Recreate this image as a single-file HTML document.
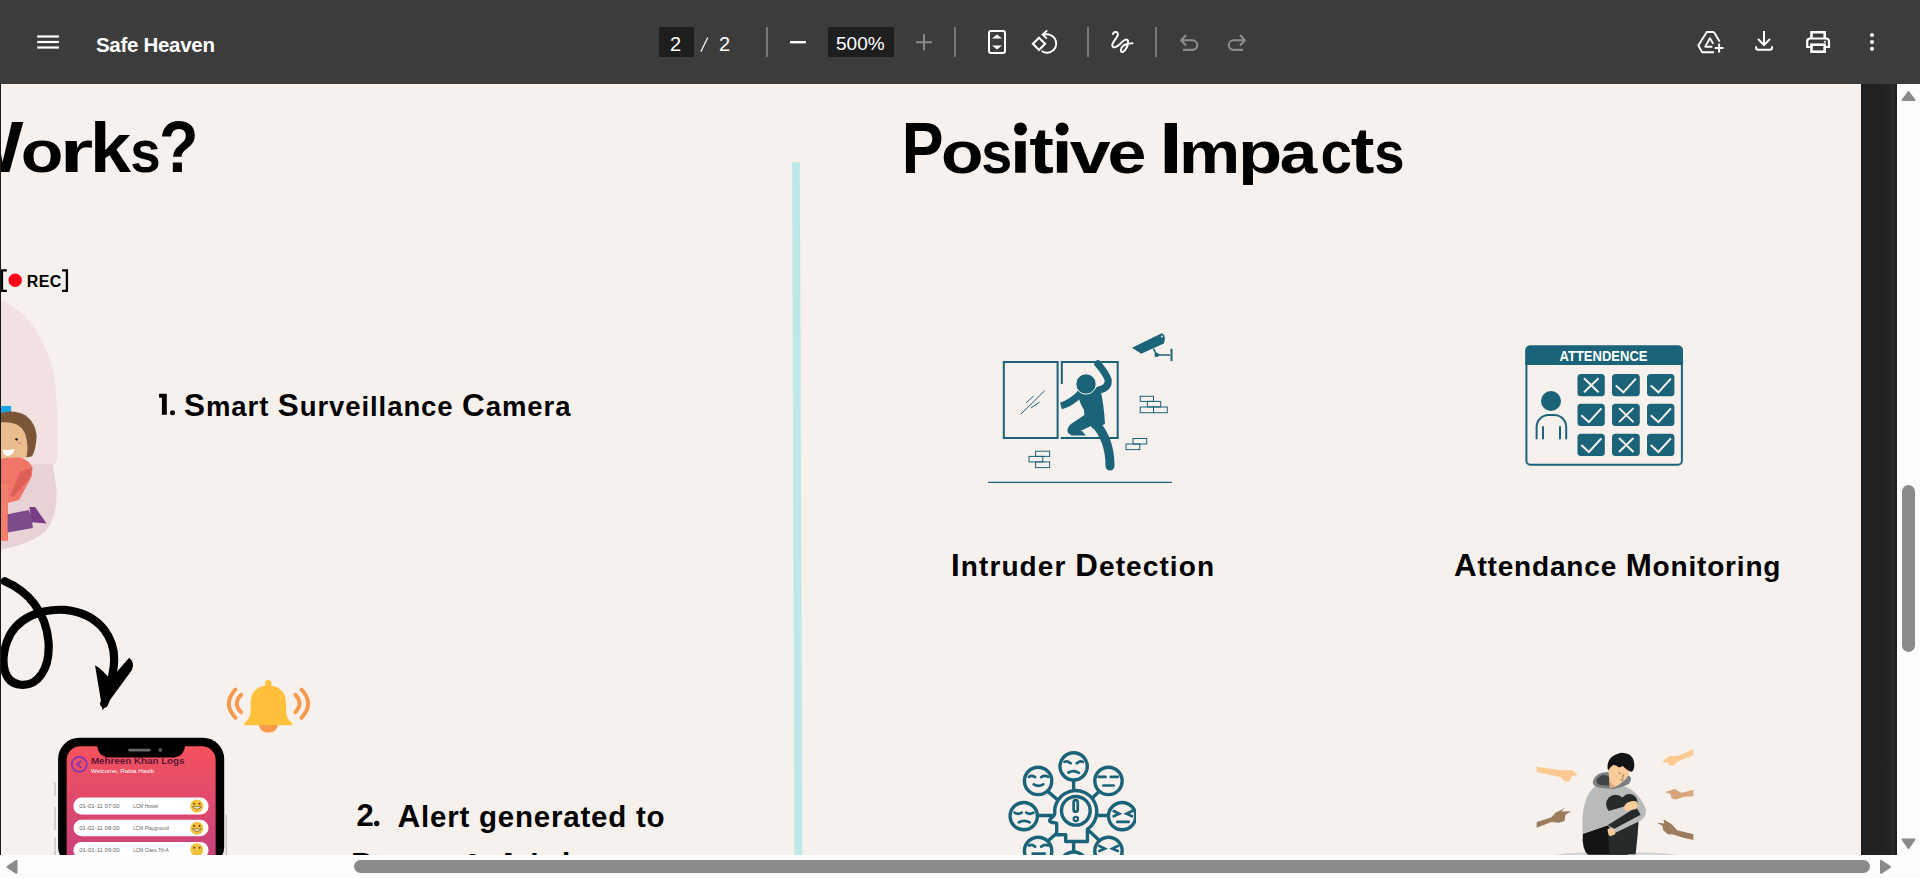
<!DOCTYPE html>
<html><head><meta charset="utf-8">
<style>
*{margin:0;padding:0;box-sizing:border-box}
html,body{width:1920px;height:878px;overflow:hidden;background:#282828;font-family:"Liberation Sans",sans-serif}
.a{position:absolute}
#tb{position:absolute;left:0;top:0;width:1920px;height:84px;background:#3c3c3c;color:#fff}
#view{position:absolute;left:0;top:84px;width:1897px;height:771px;background:linear-gradient(90deg,#1a1a1a 0,#1a1a1a 1861px,#212121 1863px,#222 1885px,#2a2a2a 1894px,#1c1c1c 1896px);overflow:hidden}
#page{position:absolute;left:1px;top:0;width:1860px;height:771px;background:#f6f1ed;overflow:hidden}
#vs{position:absolute;left:1897px;top:84px;width:23px;height:794px;background:#fcfcfc}
#hs{position:absolute;left:0;top:855px;width:1897px;height:23px;background:#fcfcfc}
.t{position:absolute;white-space:pre;color:#000;font-weight:700;line-height:1}
.tw{position:absolute;white-space:pre;color:#fff;line-height:1}
</style></head><body>
<div id="tb">
  <div class="tw" style="left:96px;top:35px;font-size:20.5px;font-weight:700;letter-spacing:-0.3px">Safe Heaven</div>
  <div class="a" style="left:659px;top:27px;width:35px;height:30px;background:#1e1e1e"></div>
  <div class="a" style="left:828px;top:27px;width:66px;height:30px;background:#1e1e1e"></div>
  <div class="tw" style="left:670px;top:34px;font-size:20px">2</div>
  
  <div class="tw" style="left:719px;top:34px;font-size:20px">2</div>
  <div class="tw" style="left:836px;top:34px;font-size:19px">500%</div>
  <svg class="a" style="left:0;top:0" width="1920" height="84" viewBox="0 0 1920 84">
    <g fill="#fff">
      <rect x="37.2" y="35.4" width="21.7" height="2.2"/>
      <rect x="37.2" y="40.9" width="21.7" height="2.2"/>
      <rect x="37.2" y="46.4" width="21.7" height="2.2"/>
      <rect x="790" y="41" width="16" height="2.4"/>
      <path d="M700.3 51.5 L707.2 37.2 L708.3 37.7 L701.4 52Z"/>
    </g>
    <g fill="#787878">
      <rect x="766" y="27" width="2" height="30"/>
      <rect x="954" y="27" width="2" height="30"/>
      <rect x="1087" y="27" width="2" height="30"/>
      <rect x="1155" y="27" width="2" height="30"/>
    </g>
    <g fill="#8a8a8a"><rect x="916" y="41.2" width="16" height="2"/><rect x="923" y="34.2" width="2" height="16"/></g>
    <!-- fit page -->
    <rect x="989" y="31" width="16" height="22" rx="2" fill="none" stroke="#fff" stroke-width="2"/>
    <path d="M992 38.5 L997 34.5 L1002 38.5Z M992 45.5 L997 49.5 L1002 45.5Z" fill="#fff"/>
    <!-- rotate -->
    <path d="M1039 37.7 L1045.1 43.85 L1039 50 L1032.9 43.85Z" fill="none" stroke="#fff" stroke-width="2.1"/>
    <path d="M1043.1 35.2 A9.2 9.2 0 1 1 1041.7 51" fill="none" stroke="#fff" stroke-width="1.9"/>
    <path d="M1047.2 30.4 L1042.6 34.6 L1046.9 38.6" fill="none" stroke="#fff" stroke-width="1.9"/>
    <!-- draw -->
    <path d="M1112.8 34 C1114.5 31 1118.5 31.5 1117.8 35 C1117 38.5 1112 42 1112.3 45.5 C1112.6 48.5 1116.5 47.5 1119.5 44.5 C1122.5 41.5 1126.5 37.5 1127.8 40.5 C1129 43.5 1126 50.5 1123 51.8 C1120.5 52.8 1120 49.5 1122.5 46.5 C1124.5 44.5 1129 43.5 1132.5 43.3" fill="none" stroke="#fff" stroke-width="2" stroke-linecap="round" stroke-linejoin="round"/>
    <!-- undo/redo -->
    <g fill="none" stroke="#8c8c8c" stroke-width="2.1">
      <path d="M1186 35 L1181.2 40.3 L1186 45.5 M1181.5 40.3 H1192.5 A4.8 4.8 0 0 1 1192.5 49.9 H1183"/>
      <path d="M1240 35 L1244.8 40.3 L1240 45.5 M1244.5 40.3 H1233.5 A4.8 4.8 0 0 0 1233.5 49.9 H1243"/>
    </g>
    <!-- drive -->
    <g fill="none" stroke="#fff" stroke-width="1.9" stroke-linejoin="round">
      <path d="M1713.9 32 H1706.8 L1698.3 45.6 L1702.2 52.2 H1714"/>
      <path d="M1713.9 32 L1719.6 41.6"/>
      <path d="M1713.3 43.8 L1709.9 38.3 L1705.2 46.7 H1712.3"/>
    </g>
    <g fill="#fff"><rect x="1718.1" y="43.6" width="2" height="9"/><rect x="1714.7" y="47" width="8.8" height="2"/></g>
    <!-- download -->
    <g fill="none" stroke="#fff" stroke-width="2">
      <path d="M1764 31 V45 M1758 39 L1764 45 L1770 39"/>
      <path d="M1756.1 46.2 V47.8 A2 2 0 0 0 1758.1 49.8 H1770 A2 2 0 0 0 1772 47.8 V46.2"/>
    </g>
    <!-- print -->
    <g fill="none" stroke="#fff">
      <path d="M1811.5 38.5 V32.3 H1824.7 V38.5" stroke-width="2.6"/>
      <path d="M1810.5 47 H1807.2 V41.5 A3 3 0 0 1 1810.2 38.5 H1826 A3 3 0 0 1 1829 41.5 V47 H1825.5" stroke-width="2.2"/>
      <rect x="1811.5" y="44.7" width="13.2" height="7" stroke-width="2.6"/>
    </g>
    <circle cx="1824.9" cy="41.7" r="1" fill="#fff"/>
    <!-- more -->
    <g fill="#fff"><circle cx="1872" cy="35" r="2"/><circle cx="1872" cy="42" r="2"/><circle cx="1872" cy="48.8" r="2"/></g>
  </svg>
</div>
<div id="view">
  <div id="page">
    
    
    
    
    <div class="t" style="left:183px;top:306px;font-size:27.5px;letter-spacing:0.92px"><span style="font-size:31.5px">S</span>mart <span style="font-size:31.5px">S</span>urveillance <span style="font-size:31.5px">C</span>amera</div>
    <div class="t" style="left:355.5px;top:715.5px;font-size:31px">2</div>
    <div class="t" style="left:396.5px;top:716.5px;font-size:29.5px;letter-spacing:0.78px"><span style="font-size:31.5px">A</span>lert generated to</div>
    <div class="t" style="left:350px;top:764.5px;font-size:31.5px">P</div>
    <div class="t" style="left:461px;top:765px;font-size:29.5px">&amp;</div>
    <div class="t" style="left:496px;top:765px;font-size:29.5px;letter-spacing:0.8px"><span style="font-size:31.5px">A</span>d</div>
    <div class="t" style="left:561px;top:765px;font-size:29.5px">i</div>
    <div class="t" style="left:950px;top:466px;font-size:28px;letter-spacing:1.09px"><span style="font-size:31.3px">I</span>ntruder <span style="font-size:31.3px">D</span>etection</div>
    <div class="t" style="left:1453px;top:466px;font-size:28px;letter-spacing:0.82px"><span style="font-size:31.3px">A</span>ttendance <span style="font-size:31.3px">M</span>onitoring</div>
    
    <svg class="a" style="left:-1px;top:-84px" width="1920" height="939" viewBox="0 0 1920 939">

    <defs>
      <clipPath id="emoclip"><rect x="0" y="0" width="1068" height="900"/></clipPath>
      <clipPath id="boyclip"><rect x="120" y="0" width="1150" height="900"/></clipPath>
      <linearGradient id="scr" x1="0" y1="0" x2="0" y2="1"><stop offset="0" stop-color="#f5525c"/><stop offset="1" stop-color="#c43f80"/></linearGradient>
    </defs>
    <!-- emotions -->
    <g transform="translate(990,740) scale(0.13665)" clip-path="url(#emoclip)" fill="none" stroke="#1b6379" stroke-width="25" stroke-linecap="round">
      <circle cx="612" cy="193" r="100"/>
      <circle cx="352" cy="300" r="100"/>
      <circle cx="867" cy="300" r="100"/>
      <circle cx="247" cy="557" r="100"/>
      <circle cx="967" cy="557" r="100"/>
      <circle cx="352" cy="812" r="100"/>
      <circle cx="867" cy="812" r="100"/>
      <circle cx="612" cy="920" r="100"/>
      <path d="M474 540 A154 154 0 1 1 713 652 V743 H554 V693 H488 V608 L448 602 Q428 594 440 580 L468 552 Z" stroke-linecap="butt" stroke-linejoin="round"/>
      <circle cx="628" cy="518" r="105"/>
      <rect x="612" y="440" width="30" height="85" rx="15" stroke-width="20"/>
      <circle cx="628" cy="578" r="16" stroke-width="16"/>
      <path d="M612 293 V360 M425 378 L492 436 M797 378 L752 420 M347 552 H458 M790 552 H867 M428 735 L490 680 M720 660 L795 730 M612 745 V820" stroke-linecap="butt"/>
      <g stroke-width="20">
        <path d="M545 160 Q565 150 590 170 M635 170 Q660 150 680 160 M575 238 Q612 215 650 240"/>
        <path d="M285 270 Q305 255 330 272 M375 272 Q400 255 425 270 M320 325 Q352 345 390 325"/>
        <path d="M795 270 H845 M885 270 H935 M830 333 H905"/>
        <path d="M180 532 Q205 548 232 532 M265 532 Q292 548 318 532 M212 602 Q250 580 290 603"/>
        <path d="M905 520 L945 540 L905 558 M1040 520 L1000 540 L1040 558 M932 600 H1015"/>
        <path d="M285 772 Q305 760 330 780 M375 780 Q400 760 425 772 M312 832 H400"/>
        <path d="M800 775 L840 795 L800 812 M935 775 L895 795 L935 812"/>
      </g>
    </g>
    <!-- sad boy -->
    <g transform="translate(1520,740) scale(0.136687)">
      <g clip-path="url(#boyclip)">
        <path fill="#fdc993" d="M120 195 L300 222 L385 222 L422 258 L380 264 L365 300 L330 306 L300 272 L120 235 Z"/>
        <path fill="#fdc993" d="M1270 65 L1270 112 L1150 160 L1120 190 L1090 182 L1080 162 L1040 165 L1060 140 L1090 118 L1160 116 Z"/>
        <path fill="#d8a67c" d="M1270 365 L1270 412 L1200 416 L1140 436 L1110 430 L1100 396 L1060 380 L1100 370 L1130 356 L1180 386 Z"/>
        <path fill="#9d7b5d" d="M120 602 L230 566 L262 530 L330 498 L302 524 L376 522 L332 546 L326 592 L282 606 L232 600 L120 642Z"/>
        <path fill="#9d7b5d" d="M1270 690 L1270 732 L1180 712 L1120 692 L1082 690 L1050 662 L1040 626 L1000 606 L1056 610 L1050 580 L1110 616 L1150 660 Z"/>
      </g>
      <ellipse cx="700" cy="842" rx="440" ry="22" fill="#d3d3d3"/>
      <path fill="#121415" d="M459 685 Q452 800 498 840 L790 840 L800 690 L641 624 Z"/>
      <path fill="#262a2b" d="M645 690 L868 590 L860 700 L846 835 L655 840 Z"/>
      <path fill="#b9baba" d="M459 688 Q440 420 555 335 L700 322 Q850 340 921 503 Q928 562 877 592 L690 682 L641 624 Z"/>
      <circle cx="700" cy="470" r="70" fill="#262a2b"/>
      <circle cx="800" cy="455" r="60" fill="#262a2b"/>
      <path fill="#b9baba" d="M600 560 L630 525 L762 487 L852 490 L641 624 L590 640 Z"/>
      <path fill="#262a2b" d="M640.8 624.3 L849.9 492.3 L882.9 547.3 L690.4 649.1 Z"/>
      <path fill="#f8cc98" d="M762 487 Q770 462 800 452 Q840 440 858 455 Q868 482 850 505 L770 522 Z"/>
      <path fill="#f8cc98" d="M641 652 Q662 640 690 652 L698 690 L660 705 Q640 692 641 652Z"/>
      <path fill="#7c7f81" d="M533 305 Q545 255 600 240 Q640 232 690 236 Q790 248 812 275 Q812 310 792 323 Q740 350 677 360 L573 348 Q528 330 533 305Z"/><path fill="#3f4345" d="M561 293 Q575 262 610 256 Q650 258 665 281 L659 335 L585 329 Q555 315 561 293Z"/>
      
      
      
      
      
      <path fill="#f8cc98" d="M646 219 Q660 190 683 183 L752 186 Q792 205 802 228 Q792 280 750 305 Q720 335 695 342 L658 354 L652 280 Z"/><path fill="#d9a577" d="M652 300 L695 342 L658 354Z"/>
      <path fill="#121314" d="M643 220 Q625 120 738 94 Q830 95 836 175 Q838 220 817 232 Q790 230 750 189 Q735 205 719 198 Q700 180 683 183 Q660 195 646 222 Z"/><path d="M722 240 L738 246 M760 250 Q752 270 748 282 M735 290 Q745 296 758 290" fill="none" stroke="#222" stroke-width="4"/>
    </g>
    <!-- girl -->
    <g transform="translate(0,280) scale(0.31873)">
      <path fill="#f2e1e1" d="M0 62 Q125 110 170 300 Q184 400 180 560 Q176 575 166 580 L0 580Z"/>
      <path fill="#e8d2d5" d="M0 578 L166 578 Q172 620 177 660 Q182 740 142 790 Q92 830 0 846 Z"/>
      <rect x="0" y="395" width="35" height="25" fill="#1aa3e2"/>
      <path fill="#eabd8c" d="M0 445 Q55 440 78 480 Q92 520 82 556 Q60 566 0 562 Z"/>
      <path fill="#7b5636" d="M0 418 Q40 404 80 424 Q113 450 115 490 Q113 530 101 553 L82 557 Q92 520 78 480 Q60 440 0 447Z"/>
      <path fill="#fff" d="M8 532 Q28 535 46 530 Q40 552 22 552 Q10 550 8 532Z"/>
      <circle cx="52" cy="500" r="4" fill="#222"/>
      <ellipse cx="62" cy="512" rx="7" ry="4" fill="#f19aa0"/>
      <path fill="#f0766a" d="M0 560 L60 556 Q96 565 102 590 L100 615 L60 690 L25 700 L25 818 L0 818Z"/>
      <path fill="#de6158" d="M64 600 L101 590 L93 622 L42 682 L32 676Z"/>
      <path fill="#f3806a" d="M0 640 L24 640 L24 815 L0 818Z"/>
      <path fill="#7d4a8c" d="M24 735 L90 722 L100 745 L103 778 L24 792Z"/>
      <path fill="#7a3e88" d="M92 712 L110 712 L146 764 L100 760Z"/>
    </g>
    <!-- arrow, bell, phone -->
    <g transform="translate(0,560) scale(0.34176)">
      <path d="M14 62 C80 90 135 150 142 240 C147 320 110 370 60 365 C10 360 0 300 20 240 C45 168 120 142 190 146 C290 156 350 230 330 330 C322 370 315 395 305 420" fill="none" stroke="#000" stroke-width="24" stroke-linecap="round"/>
      <path d="M278 308 Q300 320 322 350 L378 286 Q396 300 386 322 L300 440 Z" fill="#000"/>
      <path fill="#ffc13b" d="M785 367 C750 367 733.5 390 733.5 415 L733.5 440 C733.5 460 725 470 716 476 C711 480 714 483.5 722 483.5 H848 C856 483.5 859 480 854 476 C845 470 837 460 837 440 L837 415 C837 390 820 367 785 367Z"/>
      <rect x="776" y="351" width="18" height="22" rx="9" fill="#ffc13b"/>
      <path fill="#fa994a" d="M758 483 A27.5 22 0 0 0 813 483Z"/>
      <g fill="none" stroke="#fa984a" stroke-width="11" stroke-linecap="round">
        <path d="M689 379 Q650 420 689 462"/>
        <path d="M705.5 394 Q680 420 705.5 446"/>
        <path d="M882 379 Q921 420 882 462"/>
        <path d="M864 394 Q889 420 864 446"/>
      </g>
      <g fill="#c4c4c4"><rect x="159" y="650" width="4" height="40"/><rect x="159" y="722" width="4" height="68"/><rect x="159" y="812" width="4" height="60"/><rect x="660" y="745" width="4" height="125"/></g>
      <rect x="170" y="520" width="486" height="380" rx="62" fill="#000"/>
      <rect x="195" y="545" width="436" height="360" rx="40" fill="url(#scr)"/>
      <path fill="#000" d="M284 543 H542 Q538 576 510 578 H316 Q288 576 284 543Z"/>
      <rect x="375" y="552" width="66" height="8" rx="4" fill="#6b6b6b"/>
      <circle cx="469" cy="556" r="6" fill="#555"/>
      <circle cx="232" cy="598" r="22" fill="none" stroke="#7a35c0" stroke-width="5"/>
      <path d="M238 588 L226 598 L238 608" fill="none" stroke="#7a35c0" stroke-width="5"/>
      <text x="266" y="598" font-family="Liberation Sans" font-size="28" font-weight="700" fill="#5a1535" textLength="274" lengthAdjust="spacingAndGlyphs">Mehreen Khan Logs</text>
      <text x="266" y="622" font-family="Liberation Sans" font-size="15" fill="#fff" textLength="185" lengthAdjust="spacingAndGlyphs">Welcome, Rabia Hasib</text>
      <g fill="#fff"><rect x="215" y="695" width="395" height="50" rx="24"/><rect x="215" y="760" width="395" height="48" rx="24"/><rect x="215" y="825" width="395" height="48" rx="24"/></g>
      <g font-family="Liberation Sans" font-size="14" fill="#666">
        <text x="232" y="726" textLength="118" lengthAdjust="spacingAndGlyphs">01-01-11 07:00</text><text x="390" y="726">LCM Hostel</text>
        <text x="232" y="790" textLength="118" lengthAdjust="spacingAndGlyphs">01-01-11 08:00</text><text x="390" y="790">LCM Playground</text>
        <text x="232" y="855" textLength="118" lengthAdjust="spacingAndGlyphs">01-01-11 09:00</text><text x="390" y="855">LCM Class 7th A</text>
      </g>
      <g fill="#f3c23f"><circle cx="576" cy="720" r="19"/><circle cx="576" cy="785" r="19"/><circle cx="576" cy="848" r="19"/></g>
      <g fill="#6b4a12"><circle cx="568" cy="713" r="3"/><circle cx="584" cy="713" r="3"/><circle cx="568" cy="778" r="3"/><circle cx="584" cy="778" r="3"/><circle cx="568" cy="842" r="3"/><circle cx="584" cy="842" r="3"/></g>
      <g fill="#fff" stroke="#6b4a12" stroke-width="2"><path d="M563 722 Q576 736 589 722Z"/><path d="M563 787 Q576 801 589 787Z"/></g>
    </g>
    <!-- REC -->
    <path d="M6.8 270.4 H2 V290.8 H6.8 M62 270.4 H66.9 V290.8 H62" fill="none" stroke="#000" stroke-width="2.3"/>
    <circle cx="15.2" cy="280.3" r="6.7" fill="#ff0019"/>
    <path d="M792.1 162.3 H799.9 L802.3 860 H794.4Z" fill="#bde7e8"/>
    <g font-family="Liberation Sans" font-weight="700" fill="#000">
      <text transform="translate(901.70 172.70) scale(0.868 1)" font-size="72.24">P</text>
      <text transform="translate(940.88 172.70) scale(1.182 1)" font-size="58.91">o</text>
      <text transform="translate(981.34 172.70) scale(0.945 1)" font-size="58.86">s</text>
      <rect x="1015.2" y="141.2" width="10.5" height="31.5"/><circle cx="1020.5" cy="128.9" r="6.5"/>
      <text transform="translate(1029.30 172.70) scale(1.134 1)" font-size="65.15">t</text>
      <rect x="1056.9" y="141.2" width="10.4" height="31.5"/><circle cx="1062.1" cy="128.9" r="6.5"/>
      <text transform="translate(1069.71 172.70) scale(1.258 1)" font-size="58.49">v</text>
      <text transform="translate(1107.57 172.70) scale(1.188 1)" font-size="58.91">e</text>
      <text transform="translate(1158.89 172.70) scale(1.180 1)" font-size="72.38">I</text>
      <text transform="translate(1179.06 172.70) scale(1.162 1)" font-size="59.23">m</text>
      <text transform="translate(1237.93 172.70) scale(1.225 1)" font-size="59.12">p</text>
      <text transform="translate(1279.83 172.70) scale(1.143 1)" font-size="58.91">a</text>
      <text transform="translate(1320.39 172.70) scale(0.960 1)" font-size="58.91">c</text>
      <text transform="translate(1350.73 172.70) scale(1.082 1)" font-size="65.61">t</text>
      <text transform="translate(1374.18 172.70) scale(0.927 1)" font-size="58.86">s</text>
      <text transform="translate(-50.08 172.40) scale(1.080 1)" font-size="71.95">W</text>
      <text transform="translate(20.77 172.40) scale(1.185 1)" font-size="58.91">o</text>
      <text transform="translate(59.73 172.40) scale(1.461 1)" font-size="58.86">r</text>
      <text transform="translate(90.04 172.40) scale(1.036 1)" font-size="71.28">k</text>
      <text transform="translate(130.37 172.40) scale(0.931 1)" font-size="58.86">s</text>
      <text transform="translate(158.93 172.40) scale(0.892 1)" font-size="72.47">?</text>
      <path d="M159.1 393.8 H166.8 V414.7 H161.9 V397.8 H159.1 Z"/><circle cx="172.5" cy="412.8" r="2.5"/><circle cx="376.7" cy="823.5" r="2.7"/>
    </g>
    <!-- attendance -->
    <g id="att">
      <rect x="1526.4" y="346.4" width="155.5" height="118.4" rx="4" fill="none" stroke="#1b6379" stroke-width="2"/>
      <path d="M1525.4 365 V350.4 A5 5 0 0 1 1530.4 345.4 H1677.9 A5 5 0 0 1 1682.9 350.4 V365Z" fill="#1b6379"/>
      <text x="1559.5" y="360.8" font-family="Liberation Sans" font-weight="700" font-size="14.3" fill="#fff" textLength="88" lengthAdjust="spacingAndGlyphs">ATTENDENCE</text>
      <g fill="#1b6379">
        <rect x="1577.5" y="374" width="27.3" height="22.3" rx="3.5"/>
        <rect x="1612" y="374" width="27.8" height="22.3" rx="3.5"/>
        <rect x="1647" y="374" width="27.4" height="22.3" rx="3.5"/>
        <rect x="1577.5" y="403.8" width="27.3" height="22.3" rx="3.5"/>
        <rect x="1612" y="403.8" width="27.8" height="22.3" rx="3.5"/>
        <rect x="1647" y="403.8" width="27.4" height="22.3" rx="3.5"/>
        <rect x="1577.5" y="433.7" width="27.3" height="22.3" rx="3.5"/>
        <rect x="1612" y="433.7" width="27.8" height="22.3" rx="3.5"/>
        <rect x="1647" y="433.7" width="27.4" height="22.3" rx="3.5"/>
      </g>
      <g fill="none" stroke="#f6f1ed" stroke-width="2">
        <path d="M1584 378.3 L1598.5 392.3 M1598.5 378.3 L1584 392.3"/>
        <path d="M1615.8 385.4 L1623.4 392.3 L1635.9 378.6"/>
        <path d="M1650.8 385.4 L1658.4 392.3 L1670.9 378.6"/>
        <path d="M1581.3 415.2 L1588.9 422.1 L1601.4 408.4"/>
        <path d="M1619 408.1 L1633.5 422.1 M1633.5 408.1 L1619 422.1"/>
        <path d="M1650.8 415.2 L1658.4 422.1 L1670.9 408.4"/>
        <path d="M1581.3 445.1 L1588.9 452 L1601.4 438.3"/>
        <path d="M1619 438 L1633.5 452 M1633.5 438 L1619 452"/>
        <path d="M1650.8 445.1 L1658.4 452 L1670.9 438.3"/>
      </g>
      <circle cx="1551" cy="401" r="10" fill="#1b6379"/>
      <path d="M1536.6 438.5 V427 A12 12 0 0 1 1548.6 415 H1554.2 A12 12 0 0 1 1566.2 427 V438.5 M1543 427 V438.5 M1560 427 V438.5" fill="none" stroke="#1b6379" stroke-width="2" stroke-linecap="round"/>
    </g>
    <!-- intruder -->
    <g id="intr" fill="none" stroke="#1b6379">
      <rect x="1003.8" y="362" width="53.8" height="76" stroke-width="2"/>
      <rect x="1061.8" y="362" width="55.9" height="76" stroke-width="2"/>
      <path d="M1021 414 L1044.8 390.7 M1026 403 L1033.6 396 M1031 408 L1039.7 402" stroke-width="1"/>
      <path d="M988 482.4 H1172" stroke-width="1.4"/>
      <g stroke-width="1">
        <rect x="1140.2" y="396.3" width="13.3" height="5.1"/>
        <rect x="1147.4" y="401.4" width="13.3" height="5.5"/>
        <rect x="1140.2" y="407" width="13.3" height="5.7"/>
        <rect x="1153.5" y="407" width="13.8" height="5.7"/>
        <rect x="1133" y="438.5" width="13.7" height="5.5"/>
        <rect x="1126" y="444" width="13.8" height="5.6"/>
        <rect x="1035.6" y="451.2" width="14" height="5.2"/>
        <rect x="1029" y="456.4" width="13.8" height="5.5"/>
        <rect x="1035.6" y="461.9" width="14" height="5.7"/>
      </g>
    </g>
    <g fill="#1b6379">
      <rect x="1059.6" y="384" width="3.6" height="53" fill="#f6f1ed"/>
      <path d="M1061 406 Q1071 403 1080 394" fill="none" stroke="#1b6379" stroke-width="7"/>
      <path d="M1077 391 Q1088 386 1100.5 390 Q1104 405 1105 424 L1093 429 L1084.5 417 L1084 410 Q1079 402 1077 391Z"/>
      <path d="M1086 414 L1093 425 L1073 434.5 Q1067 435 1067.5 429.5 Q1068 426 1071 424 Z"/>
      <path d="M1069 431 L1082 431 L1086 435.6 L1071 435.6Z"/>
      <path d="M1093 421 Q1110 438 1110 466" fill="none" stroke="#1b6379" stroke-width="9" stroke-linecap="round"/>
      <path d="M1097.8 363.8 Q1106 373 1108.2 380 Q1109 388 1099 390" fill="none" stroke="#1b6379" stroke-width="7" stroke-linecap="round"/>
      <circle cx="1086" cy="384" r="10.2" stroke="#f6f1ed" stroke-width="1"/>
      <path d="M1132 347.7 L1161.7 333.3 Q1165 334 1164.8 339.5 L1163.8 343.6 L1141.2 353.8Z"/>
      <path d="M1153.5 348.7 L1156.6 354.9 H1170" fill="none" stroke="#1b6379" stroke-width="1.5"/>
      <rect x="1170.5" y="348.7" width="2" height="12.3"/>
      <circle cx="1156.6" cy="354.9" r="2.2"/>
      <circle cx="1162" cy="336.5" r="1" fill="#f6f1ed"/>
    </g>
    </svg>
    <div class="t" style="left:25.8px;top:190px;font-size:16px;letter-spacing:0.4px">REC</div>
  </div>
</div>
<div id="vs">
  <svg class="a" style="left:0;top:0" width="23" height="794">
    <path d="M11.5 8 L5.5 16 H17.5Z" fill="#8a8a8a" stroke="#8a8a8a" stroke-width="2" stroke-linejoin="round"/>
    <path d="M5.5 755.5 H17.5 L11.5 764Z" fill="#8a8a8a" stroke="#8a8a8a" stroke-width="2" stroke-linejoin="round"/>
    <rect x="5" y="401" width="13" height="167" rx="6.5" fill="#8a8a8a"/>
  </svg>
</div>
<div id="hs">
  <svg class="a" style="left:0;top:0" width="1897" height="23">
    <path d="M7.5 11.8 L16.5 5.8 V17.8Z" fill="#8a8a8a" stroke="#8a8a8a" stroke-width="2" stroke-linejoin="round"/>
    <path d="M1890 11.8 L1881 5.8 V17.8Z" fill="#8a8a8a" stroke="#8a8a8a" stroke-width="2" stroke-linejoin="round"/>
    <rect x="354" y="5" width="1516" height="13" rx="6.5" fill="#8a8a8a"/>
  </svg>
</div>
</body></html>
